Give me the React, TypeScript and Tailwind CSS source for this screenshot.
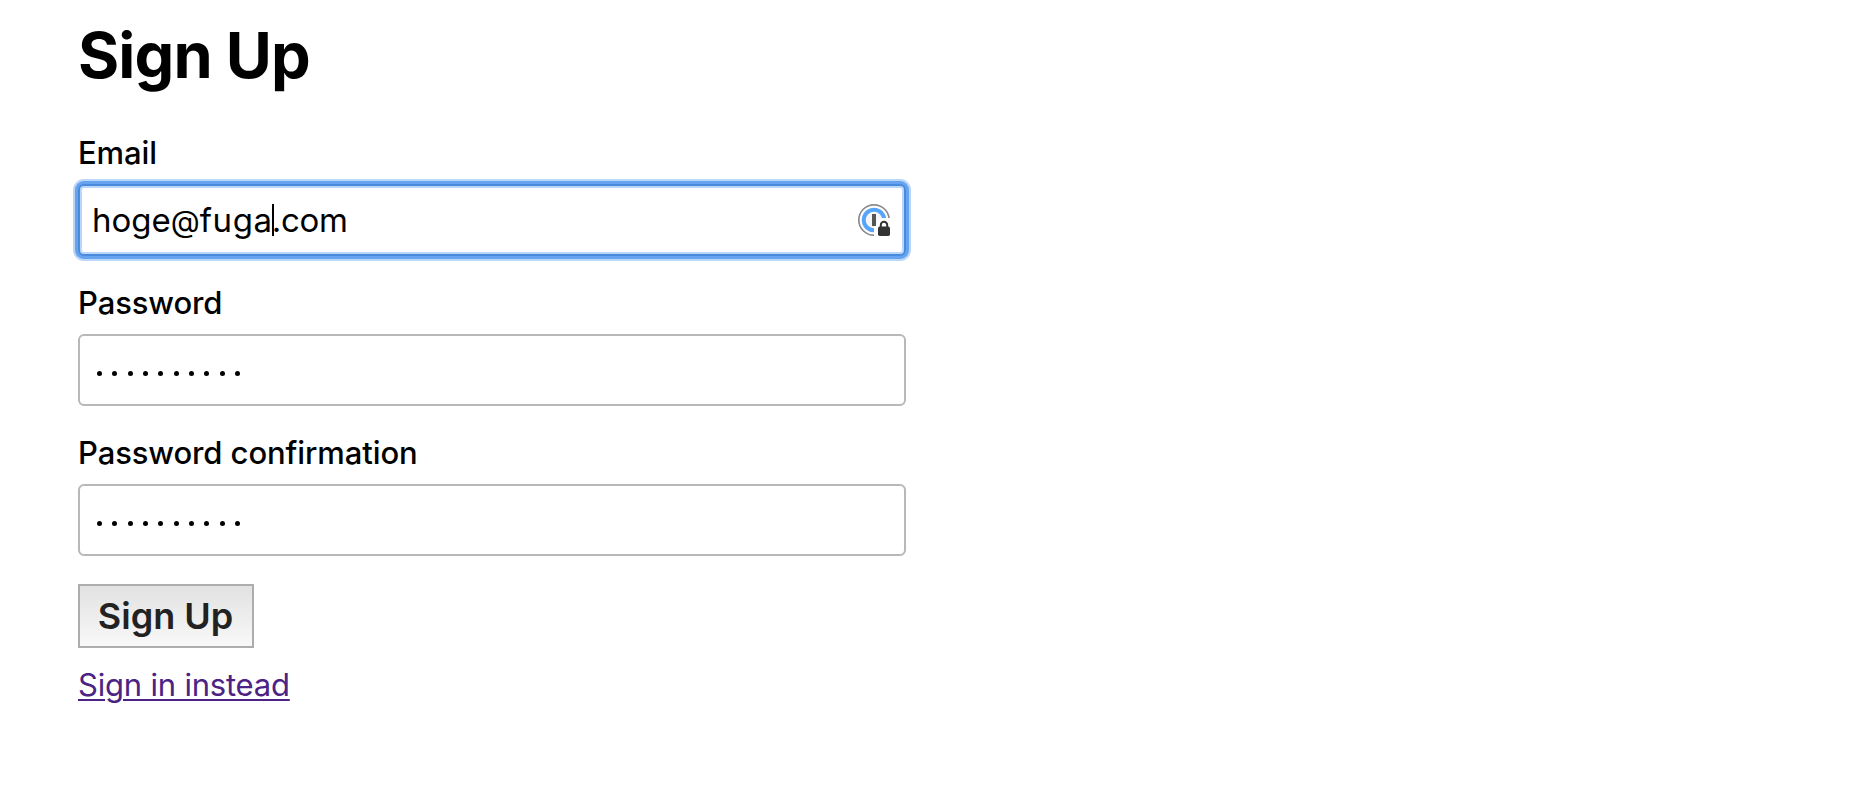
import type { ReactNode } from "react";

interface FieldProps {
  id: string;
  label: string;
  children: ReactNode;
}

const inputBox =
  "flex h-[72px] w-[828px] items-center justify-between rounded-[6px] border-2 border-[#b8b8b8] bg-white px-[13px]";

function Field({ id, label, children }: FieldProps) {
  return (
    <div className="mb-6 flex flex-col">
      <div id={id} className="h-[54px] pt-[4px] text-[31px] leading-[38px] font-medium tracking-[-0.1px]">
        {label}
      </div>
      {children}
    </div>
  );
}

function PasswordBox({ length }: { length: number }) {
  return (
    <div className={inputBox}>
      <div className="flex gap-[10.33px] pl-[4px] pt-[6px]">
        {Array.from({ length }, (_, i) => (
          <span key={i} className="size-[5px] rounded-full bg-black" />
        ))}
      </div>
    </div>
  );
}

function PasswordManagerIcon() {
  return (
    <svg width="34" height="34" viewBox="0 0 34 34" fill="none">
      <circle cx="17" cy="17" r="15.2" fill="#fff" stroke="#8b8b8b" strokeWidth="1.7" />
      <circle cx="17" cy="17" r="10.3" fill="#f5f5f5" stroke="#57a5fb" strokeWidth="4" />
      <path d="M17 34V24q0-2 3-3l1.5-4q2-2 5-2H34v19z" fill="#fff" />
      <path d="M15 11h4v12h-4z" fill="#555" />
      <rect x="21" y="23.5" width="12" height="9.5" rx="1.8" fill="#333" />
      <path d="M23.8 24v-2a3.2 3.2 0 0 1 6.4 0v2" stroke="#333" strokeWidth="2" />
    </svg>
  );
}

export default function App() {
  return (
    <main className="min-h-[787px] bg-white pl-[78px] font-[Inter,sans-serif] text-black">
      <h1 className="h-[130px] pt-[17px] text-[63px] leading-[76px] font-bold tracking-[-0.9px]">Sign Up</h1>

      <Field id="email" label="Email">
        <div className="flex h-[72px] w-[828px] items-center justify-between rounded-[6px] border-2 border-[#4a8adb] bg-white pr-[13px] pl-3 shadow-[0_0_0_3px_#65a2f0,0_0_0_5px_#bad6f8,inset_0_0_0_2px_#bad6f8]">
          <div className="flex items-center text-[33px] leading-[40px]">
            <span>
              hoge<span className="text-[30px] leading-none">@</span>
              <span className="tracking-[0.6px]">fuga</span>
            </span>
            <span className="-mr-0.5 -ml-px h-8 w-0.5 bg-black" />
            <span className="tracking-[-0.3px]">.com</span>
          </div>
          <PasswordManagerIcon />
        </div>
      </Field>

      <Field id="password" label="Password">
        <PasswordBox length={10} />
      </Field>

      <Field id="confirmation" label="Password confirmation">
        <PasswordBox length={10} />
      </Field>

      <button className="mt-7 flex h-[64px] w-[176px] items-center justify-center border-2 border-[#adadad] bg-linear-to-b from-[#e2e2e2] to-[#f8f8f8] pr-px text-[36px] font-semibold text-[#222]">
        Sign Up
      </button>
      <a href="#" className="mt-[18px] block w-fit text-[31px] leading-[38px] tracking-[-0.2px] text-[#4c2285] underline decoration-2 underline-offset-[3px]">
        Sign in instead
      </a>
    </main>
  );
}
